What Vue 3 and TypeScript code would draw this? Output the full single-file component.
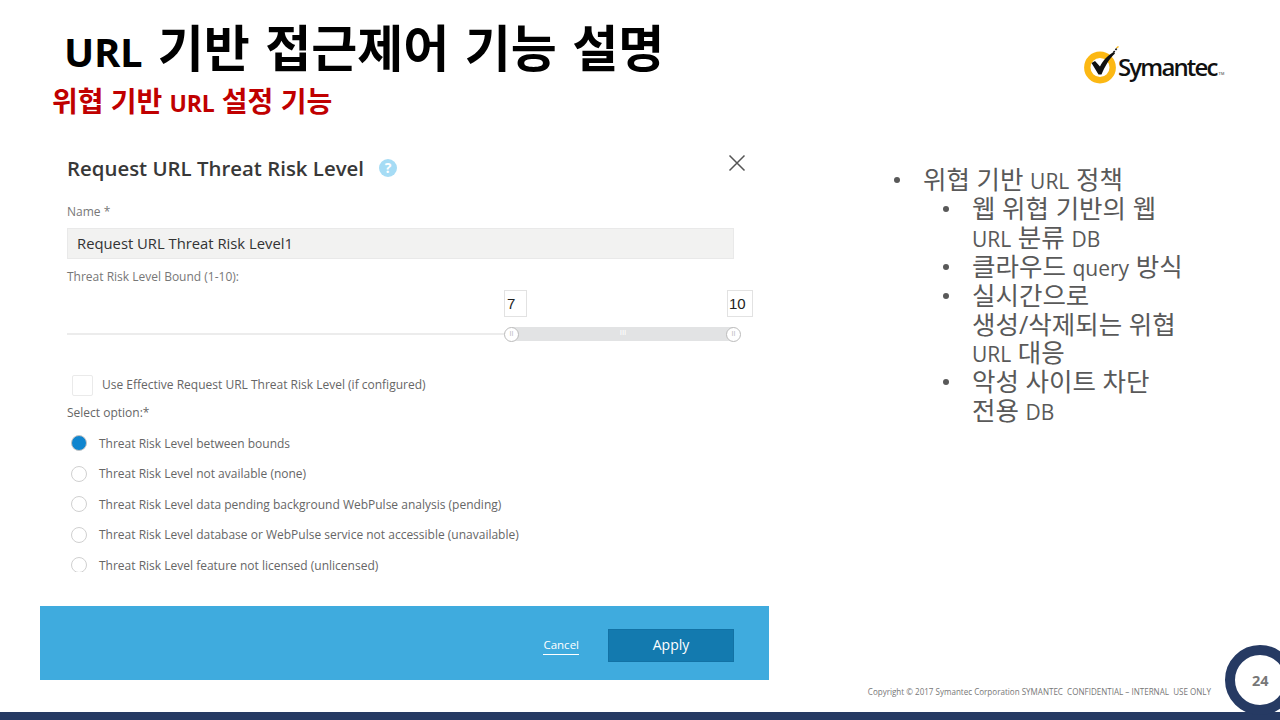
<script setup lang="ts">
const options: string[] = [
  'Threat Risk Level between bounds',
  'Threat Risk Level not available (none)',
  'Threat Risk Level data pending background WebPulse analysis (pending)',
  'Threat Risk Level database or WebPulse service not accessible (unavailable)',
  'Threat Risk Level feature not licensed (unlicensed)',
]
</script>

<template>
  <div class="slide">
    <header class="head">
      <div class="titles">
        <h1 class="title"><span class="lat">URL</span> 기반 접근제어 기능 설명</h1>
        <h2 class="subtitle">위협 기반 <span class="lat">URL</span> 설정 기능</h2>
      </div>
      <div class="logo">
        <svg class="mark" width="35" height="40" viewBox="0 0 35 40">
          <circle cx="16" cy="22.5" r="12.7" fill="#fff" stroke="#fcb813" stroke-width="6.4" />
          <path d="M7.5 18 L11 16 L16 21.5 C18.5 16 23.5 10.5 29.5 7 L31 8.5 C25.5 13.5 20.5 22 17.5 29.5 L14.5 29.5 Z" fill="#111" />
          <path d="M29.5 7.5 L33 3" stroke="#111" stroke-width="1.6" stroke-dasharray="2 1.2" />
          <path d="M32.5 3 L34.5 1.5" stroke="#fcb813" stroke-width="1.4" />
        </svg>
        <span class="brand">Symantec</span><span class="tm">TM</span>
      </div>
    </header>

    <main class="body">
      <section class="panel">
        <div class="dialog">
          <div class="dialog-head">
            <span class="dialog-title">Request URL Threat Risk Level</span>
            <span class="help">?</span>
            <svg class="close" width="18" height="18" viewBox="0 0 18 18">
              <path d="M1.5 1.5 L16.5 16.5 M16.5 1.5 L1.5 16.5" stroke="#555" stroke-width="1.5" fill="none" />
            </svg>
          </div>
          <div class="label name-label">Name *</div>
          <div class="input">Request URL Threat Risk Level1</div>
          <div class="label bound-label">Threat Risk Level Bound (1-10):</div>
          <div class="bounds">
            <span class="bound low">7</span>
            <span class="bound high">10</span>
          </div>
          <div class="slider">
            <div class="track"></div>
            <div class="range">
              <span class="grip">III</span>
              <span class="handle left">II</span>
              <span class="handle right">II</span>
            </div>
          </div>
          <div class="check-row">
            <span class="checkbox"></span>
            <span class="text check-text">Use Effective Request URL Threat Risk Level (if configured)</span>
          </div>
          <div class="label select-label">Select option:*</div>
          <ul class="options">
            <li v-for="(o, i) in options" :key="o" class="option">
              <span class="radio" :class="{ on: i === 0 }"></span>
              <span class="text">{{ o }}</span>
            </li>
          </ul>
        </div>
        <div class="actions">
          <a class="cancel">Cancel</a>
          <button class="apply">Apply</button>
        </div>
      </section>

      <ul class="notes">
        <li>위협 기반 <span class="l">URL</span> 정책
          <ul>
            <li>웹 위협 기반의 웹 <span class="l">URL</span> 분류 <span class="l">DB</span></li>
            <li>클라우드 <span class="l">query</span> 방식</li>
            <li>실시간으로 <span class="nb">생성/삭제되는</span> 위협 <span class="l">URL</span> 대응</li>
            <li>악성 사이트 차단 전용 <span class="l">DB</span></li>
          </ul>
        </li>
      </ul>
    </main>

    <footer class="foot">Copyright © 2017 Symantec Corporation SYMANTEC&nbsp; CONFIDENTIAL – INTERNAL&nbsp; USE ONLY</footer>
    <div class="bar"></div>
    <div class="page">24</div>
  </div>
</template>

<style>
html, body { margin: 0; background: #fff; }
</style>

<style scoped>
.slide {
  position: relative;
  width: 1280px;
  height: 720px;
  overflow: hidden;
  background: #fff;
  display: flex;
  flex-direction: column;
  font-family: "Open Sans", "Noto Sans CJK KR", sans-serif;
}
.head {
  height: 140px;
  flex: none;
  display: flex;
  justify-content: space-between;
}
.titles { padding: 19px 0 0 52px; }
.title {
  margin: 0 0 0 12px;
  font-size: 50px;
  line-height: 58px;
  font-weight: 700;
  word-spacing: 2.5px;
  color: #000;
  white-space: nowrap;
}
.title .lat { font-size: 40px; letter-spacing: -0.3px; }
.subtitle {
  margin: 0;
  font-size: 28px;
  line-height: 40px;
  font-weight: 700;
  color: #c00000;
  white-space: nowrap;
}
.subtitle .lat { font-size: 23px; letter-spacing: -0.2px; }
.logo {
  display: flex;
  align-items: flex-start;
  width: 196px;
  box-sizing: border-box;
  padding-top: 45px;
}
.mark { display: block; flex: none; margin-right: -1px; }
.brand {
  font-family: "Open Sans", sans-serif;
  font-weight: 600;
  font-size: 24px;
  line-height: 44px;
  letter-spacing: -1.85px;
  color: #111;
}
.tm { font-size: 4px; line-height: 58px; margin-left: 2px; color: #333; font-family: "Liberation Sans", sans-serif; }

.body {
  flex: 1;
  display: flex;
  min-height: 0;
}
.panel {
  width: 729px;
  margin-left: 40px;
  flex: none;
  display: flex;
  flex-direction: column;
}
.dialog {
  padding: 14px 36px 0 27px;
  height: 466px;
  box-sizing: border-box;
}
.dialog-head {
  display: flex;
  align-items: center;
  height: 28px;
  position: relative;
}
.dialog-title {
  font-size: 20.4px;
  font-weight: 600;
  color: #383838;
  white-space: nowrap;
}
.help {
  width: 18px;
  height: 18px;
  margin-left: 15px;
  border-radius: 50%;
  background: #a6dcf5;
  color: #fff;
  font-size: 14px;
  font-weight: 700;
  line-height: 18px;
  text-align: center;
}
.close { position: absolute; left: 661px; top: 0; }
.label {
  font-size: 12px;
  color: #777;
  line-height: 16px;
}
.name-label { margin-top: 22px; }
.input {
  width: 667px;
  height: 31px;
  margin-top: 8px;
  box-sizing: border-box;
  background: #f2f2f1;
  border: 1px solid #e9e9e9;
  padding-left: 9px;
  font-size: 14.8px;
  line-height: 29px;
  color: #333;
}
.bound-label { margin-top: 10px; }
.bounds {
  display: flex;
  height: 27px;
  margin-top: 5px;
  padding-left: 437px;
  width: 686px;
  box-sizing: border-box;
}
.bound {
  flex: none;
  box-sizing: border-box;
  height: 27px;
  border: 1px solid #e2e2e2;
  font-family: "Liberation Sans", sans-serif;
  font-size: 15px;
  line-height: 25px;
  color: #222;
  padding-left: 2px;
}
.low { width: 23px; }
.high { width: 26px; margin-left: 200px; padding-left: 1px; }
.slider {
  position: relative;
  height: 14px;
  margin-top: 10px;
  width: 686px;
}
.track {
  position: absolute;
  left: 0;
  top: 6px;
  width: 440px;
  height: 2px;
  background: #ececec;
}
.range {
  position: absolute;
  left: 445px;
  top: 0;
  width: 222px;
  height: 14px;
  background: #e2e3e4;
}
.grip {
  position: absolute;
  left: 0;
  right: 0;
  top: 0;
  text-align: center;
  font-size: 8px;
  line-height: 12px;
  color: #fff;
  font-family: "Liberation Sans", sans-serif;
}
.handle {
  position: absolute;
  top: 0;
  width: 15px;
  height: 15px;
  box-sizing: border-box;
  border: 1px solid #bbb;
  border-radius: 50%;
  background: #fff;
  color: #bbb;
  font-size: 7px;
  line-height: 12px;
  text-align: center;
  font-family: "Liberation Sans", sans-serif;
}
.left { left: -8px; }
.right { right: -7px; }
.check-row {
  display: flex;
  align-items: center;
  margin: 34px 0 0 5px;
  height: 21px;
}
.checkbox {
  width: 21px;
  height: 21px;
  box-sizing: border-box;
  border: 1px solid #eaeaea;
  border-radius: 2px;
  margin-right: 9px;
}
.text {
  font-size: 12px;
  color: #666;
  white-space: nowrap;
}
.check-text { margin-bottom: 2px; }
.select-label { margin-top: 9px; color: #666; }
.options {
  list-style: none;
  margin: 14px 0 0;
  padding: 0 0 0 4px;
  height: 137px;
  overflow: hidden;
}
.option {
  display: flex;
  align-items: center;
  height: 16px;
  margin-bottom: 14.5px;
}
.radio {
  width: 16px;
  height: 16px;
  flex: none;
  box-sizing: border-box;
  border: 1px solid #d0d0d0;
  border-radius: 50%;
  margin-right: 12px;
  background: #fff;
}
.radio.on {
  background: #0f85cf;
  border: 1px solid #c4c4c4;
}
.actions {
  height: 74px;
  background: #3fabde;
  display: flex;
  align-items: center;
  justify-content: flex-end;
  padding-right: 35px;
}
.cancel {
  font-size: 11.5px;
  color: #fff;
  line-height: 15px;
  padding-bottom: 2px;
  border-bottom: 1px solid #fff;
  margin-right: 29px;
  margin-top: 6px;
}
.apply {
  width: 126px;
  height: 33px;
  margin-top: 4px;
  background: #137aaf;
  border: 1px solid #1272a5;
  color: #fff;
  font-family: "Open Sans", sans-serif;
  font-size: 14px;
  line-height: 28px;
  padding: 0 0 1px;
}

.notes {
  list-style: none;
  margin: 25px 0 0 154px;
  padding: 0;
  width: 267px;
  color: #595959;
  font-size: 25.5px;
  line-height: 28.9px;
  word-break: keep-all;
}
.notes li { position: relative; }
.notes li::before {
  content: "";
  position: absolute;
  left: -29px;
  top: 12px;
  width: 6px;
  height: 6px;
  border-radius: 50%;
  background: #595959;
}
.notes ul {
  list-style: none;
  padding: 0;
  margin: 0 0 0 49px;
  width: 218px;
}
.l { font-size: 21px; line-height: 0; }
.nb { white-space: nowrap; }

.foot {
  position: absolute;
  right: 69px;
  top: 686px;
  font-family: "Open Sans", sans-serif;
  font-size: 8.05px;
  line-height: 12px;
  color: #777;
  white-space: nowrap;
}
.bar {
  position: absolute;
  left: 0;
  right: 0;
  bottom: 0;
  height: 8px;
  background: #263a63;
}
.page {
  position: absolute;
  left: 1225px;
  top: 645px;
  width: 70px;
  height: 70px;
  box-sizing: border-box;
  border: 10px solid #263a63;
  border-radius: 50%;
  background: #fff;
  padding-left: 17px;
  font-family: "Open Sans", sans-serif;
  font-size: 14.5px;
  font-weight: 700;
  line-height: 52px;
  color: #777;
}
</style>
